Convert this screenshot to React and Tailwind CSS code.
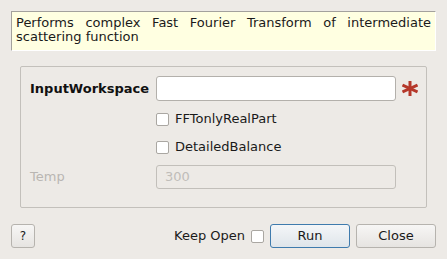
export default function App() {
  return (
    <div
      className="w-[447px] h-[259px] bg-[#edeae6] text-[#1a1a1a] text-[13px] overflow-hidden flex flex-col"
      style={{ fontFamily: '"DejaVu Sans", sans-serif' }}
    >
      <div className="mt-[11px] mx-[11px] h-[40px] bg-[#ffffe1] border border-l-[#a3a19d] border-t-[#a3a19d] border-r-white border-b-white pl-[4px] pr-[4px] pt-[4px] leading-[14px] text-justify">
        Performs complex Fast Fourier Transform of intermediate scattering function
      </div>

      <div className="mt-[15px] ml-[20px] w-[407px] h-[142px] border border-[#c3c0bb] rounded-[2px] pl-[9px] pt-[9px] flex flex-col">
        <div className="h-[25px] flex items-center">
          <div className="w-[126px] font-bold text-[#111]">InputWorkspace</div>
          <div className="w-[240px] h-[25px] bg-white border border-[#b3b0ab] rounded-[3px]" />
          <svg width="16" height="15" viewBox="0 0 16 15" className="ml-[6px]">
            <g stroke="#b5382a" strokeWidth="3" strokeLinecap="butt">
              <line x1="8" y1="0" x2="8" y2="15" />
              <line x1="0.5" y1="4" x2="15.5" y2="11" />
              <line x1="0.5" y1="11" x2="15.5" y2="4" />
            </g>
          </svg>
        </div>
        <div className="h-[36px] flex items-center pl-[126px]">
          <div className="w-[13px] h-[13px] bg-white border border-[#aaa7a2] rounded-[2px]" />
          <span className="ml-[6px]">FFTonlyRealPart</span>
        </div>
        <div className="h-[20px] flex items-center pl-[126px]">
          <div className="w-[13px] h-[13px] bg-white border border-[#aaa7a2] rounded-[2px]" />
          <span className="ml-[6px]">DetailedBalance</span>
        </div>
        <div className="mt-[8px] h-[24px] flex items-center">
          <div className="w-[126px] text-[#b9b6b2]">Temp</div>
          <div className="w-[240px] h-[24px] border border-[#c2bfba] rounded-[3px] flex items-center pl-[8px] text-[#c0bdb9]">
            300
          </div>
        </div>
      </div>

      <div className="mt-[16px] mx-[11px] flex items-center h-[24px]">
        <div className="w-[24px] h-[24px] border border-[#b6b3ae] rounded-[3px] bg-gradient-to-b from-[#f7f6f5] to-[#e6e4e1] flex items-center justify-center text-[12px]">
          ?
        </div>
        <div className="flex-1" />
        <span>Keep Open</span>
        <div className="ml-[6px] w-[13px] h-[13px] bg-white border border-[#aaa7a2] rounded-[2px]" />
        <div className="ml-[6px] w-[80px] h-[24px] border border-[#3f7bad] rounded-[3px] bg-gradient-to-b from-[#f4f6f8] to-[#dfe5ea] flex items-center justify-center">
          Run
        </div>
        <div className="ml-[6px] w-[80px] h-[24px] border border-[#b6b3ae] rounded-[3px] bg-gradient-to-b from-[#f7f6f5] to-[#e6e4e1] flex items-center justify-center">
          Close
        </div>
      </div>
    </div>
  );
}
